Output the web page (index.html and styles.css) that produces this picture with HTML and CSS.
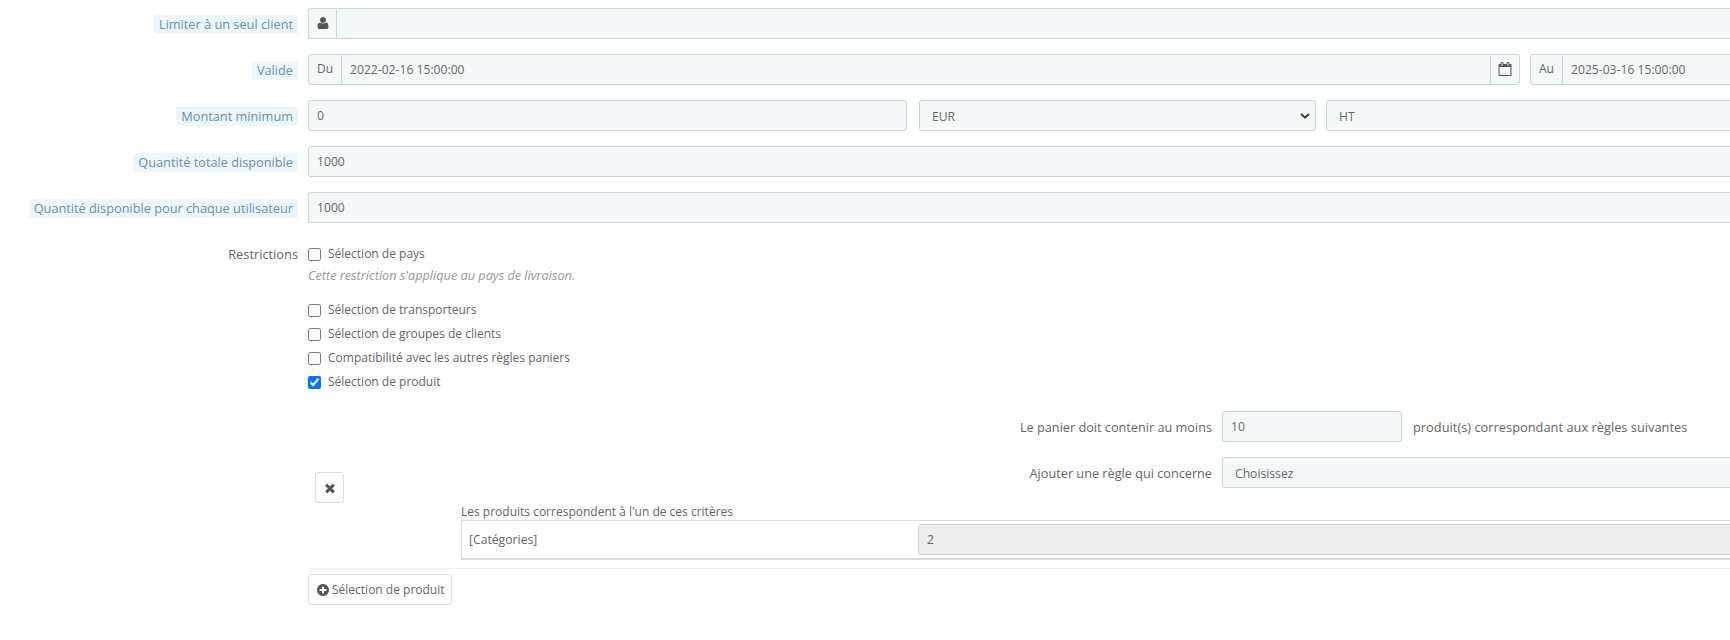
FILE: index.html
```html
<!DOCTYPE html>
<html lang="fr">
<head>
<meta charset="utf-8">
<title>Règle panier</title>
<link rel="stylesheet" href="styles.css">
</head>
<body>
<form class="form">
  <div class="row">
    <div class="label-col"><span class="chip">Limiter à un seul client</span></div>
    <div class="field-col">
      <div class="group">
        <span class="addon addon-icon"><svg class="icon" viewBox="0 0 1792 1792"><path d="M1600 1405q0 120-73 189.5t-194 69.5h-874q-121 0-194-69.5t-73-189.5q0-53 3.5-103.5t14-109 26.5-108.5 43-97.5 62-81 85.5-53.5 111.5-20q9 0 42 21.5t74.5 48 108 48 133.5 21.5 133.5-21.5 108-48 74.5-48 42-21.5q61 0 111.5 20t85.5 53.5 62 81 43 97.5 26.5 108.5 14 109 3.5 103.5zm-320-893q0 159-112.5 271.5t-271.5 112.5-271.5-112.5-112.5-271.5 112.5-271.5 271.5-112.5 271.5 112.5 112.5 271.5z"/></svg></span>
        <input class="control in-group" type="text" value="">
      </div>
    </div>
  </div>

  <div class="row">
    <div class="label-col"><span class="chip">Valide</span></div>
    <div class="field-col split">
      <div class="group group-from">
        <span class="addon addon-du">Du</span>
        <input class="control in-group" type="text" value="2022-02-16 15:00:00">
        <span class="addon addon-end"><svg class="icon" viewBox="0 0 1792 1792"><path d="M192 1664h1408v-1024h-1408v1024zm384-1216v-288q0-14-9-23t-23-9h-64q-14 0-23 9t-9 23v288q0 14 9 23t23 9h64q14 0 23-9t9-23zm768 0v-288q0-14-9-23t-23-9h-64q-14 0-23 9t-9 23v288q0 14 9 23t23 9h64q14 0 23-9t9-23zm384-64v1280q0 52-38 90t-90 38h-1408q-52 0-90-38t-38-90v-1280q0-52 38-90t90-38h128v-96q0-66 47-113t113-47h64q66 0 113 47t47 113v96h384v-96q0-66 47-113t113-47h64q66 0 113 47t47 113v96h128q52 0 90 38t38 90z"/></svg></span>
      </div>
      <div class="group group-to">
        <span class="addon addon-au">Au</span>
        <input class="control in-group" type="text" value="2025-03-16 15:00:00">
      </div>
    </div>
  </div>

  <div class="row">
    <div class="label-col"><span class="chip">Montant minimum</span></div>
    <div class="field-col split">
      <input class="control amount" type="text" value="0">
      <select class="control select currency"><option>EUR</option></select>
      <select class="control select tax"><option>HT</option></select>
    </div>
  </div>

  <div class="row">
    <div class="label-col"><span class="chip">Quantité totale disponible</span></div>
    <div class="field-col"><input class="control" type="text" value="1000"></div>
  </div>

  <div class="row">
    <div class="label-col"><span class="chip">Quantité disponible pour chaque utilisateur</span></div>
    <div class="field-col"><input class="control" type="text" value="1000"></div>
  </div>

  <div class="row restrictions">
    <div class="label-col"><span class="plain-label">Restrictions</span></div>
    <div class="field-col">
      <label class="check"><input type="checkbox">Sélection de pays</label>
      <p class="help">Cette restriction s'applique au pays de livraison.</p>
      <label class="check"><input type="checkbox">Sélection de transporteurs</label>
      <label class="check"><input type="checkbox">Sélection de groupes de clients</label>
      <label class="check"><input type="checkbox">Compatibilité avec les autres règles paniers</label>
      <label class="check"><input type="checkbox" checked>Sélection de produit</label>

      <div class="rule">
        <div class="rule-remove">
          <button class="btn btn-square" type="button"><svg class="icon" viewBox="0 0 1792 1792"><path d="M1490 1322q0 40-28 68l-136 136q-28 28-68 28t-68-28l-294-294-294 294q-28 28-68 28t-68-28l-136-136q-28-28-28-68t28-68l294-294-294-294q-28-28-28-68t28-68l136-136q28-28 68-28t68 28l294 294 294-294q28-28 68-28t68 28l136 136q28 28 28 68t-28 68l-294 294 294 294q28 28 28 68z"/></svg></button>
        </div>
        <div class="rule-body">
          <div class="rule-row">
            <span class="rule-label">Le panier doit contenir au moins</span>
            <input class="control qty" type="text" value="10">
            <span class="rule-after">produit(s) correspondant aux règles suivantes</span>
          </div>
          <div class="rule-row">
            <span class="rule-label">Ajouter une règle qui concerne</span>
            <select class="control select plain"><option>Choisissez</option></select>
          </div>
          <div class="criteria-title">Les produits correspondent à l'un de ces critères</div>
          <div class="criteria">
            <span class="criteria-name">[Catégories]</span>
            <input class="control readonly" type="text" value="2" readonly>
          </div>
        </div>
      </div>

      <hr class="rule-sep">
      <button class="btn btn-add" type="button"><svg class="icon icon-plus" viewBox="0 0 1792 1792"><path d="M1344 960v-128q0-26-19-45t-45-19h-256v-256q0-26-19-45t-45-19h-128q-26 0-45 19t-19 45v256h-256q-26 0-45 19t-19 45v128q0 26 19 45t45 19h256v256q0 26 19 45t45 19h128q26 0 45-19t19-45v-256h256q26 0 45-19t19-45zm320-64q0 209-103 385.5t-279.5 279.5-385.5 103-385.5-103-279.5-279.5-103-385.5 103-385.5 279.5-279.5 385.5-103 385.5 103 279.5 279.5 103 385.5z"/></svg>Sélection de produit</button>
    </div>
  </div>
</form>
</body>
</html>
```
FILE: styles.css
```css
* { box-sizing: border-box; }

html, body {
  overflow: hidden;
}

body {
  margin: 0;
  height: 640px;
  background: #fff;
  color: #666;
  font-family: "Open Sans", "Liberation Sans", sans-serif;
  font-size: 12px;
  line-height: 18px;
}

.form {
  padding-top: 8px;
  width: 1808px;
}

.row {
  display: flex;
  gap: 10px;
  margin-bottom: 15px;
}

.label-col {
  flex: 0 0 298px;
  display: flex;
  justify-content: flex-end;
  align-items: flex-start;
  padding-top: 7px;
}

.chip {
  height: 19px;
  line-height: 19px;
  padding: 0 5px;
  border-radius: 2px;
  background: #edf6fb;
  color: #6492b4;
  font-size: 12.75px;
  white-space: nowrap;
}

.plain-label {
  line-height: 19px;
  color: #666;
  font-size: 12.8px;
}

.field-col {
  flex: 1 1 0;
  min-width: 0;
}

.split {
  display: flex;
}

.control {
  display: block;
  width: 100%;
  height: 31px;
  padding: 0 8px;
  border: 1px solid #c7d6db;
  border-radius: 3px;
  background-color: #f5f8f9;
  color: #666;
  font-family: inherit;
  font-size: 12.15px;
  outline: none;
}

.group {
  display: flex;
  height: 31px;
}

.in-group {
  flex: 1 1 0;
  min-width: 0;
  border-radius: 0 3px 3px 0;
  border-left: 0;
}

.group-from .in-group {
  border-radius: 0;
  border-right: 0;
}

.group-from {
  flex: 0 0 1212px;
}

.group-to {
  flex: 1 1 0;
  margin-left: 10px;
}

.addon {
  flex: none;
  display: flex;
  align-items: center;
  justify-content: center;
  height: 31px;
  border: 1px solid #c7d6db;
  border-radius: 3px 0 0 3px;
  background: #f5f8f9;
  color: #666;
  padding-bottom: 1px;
}

.addon-icon { width: 29px; }
.addon-du { width: 34px; }
.addon-au { width: 33px; }

.addon-end {
  width: 30px;
  padding-right: 1px;
  border-radius: 0 3px 3px 0;
}

.icon {
  display: block;
  flex: none;
  width: 14px;
  height: 14px;
  fill: #555;
}

.amount {
  flex: 0 0 599px;
  width: 599px;
}

.select {
  appearance: none;
  padding: 2px 8px 0 12px;
}

.currency {
  flex: 0 0 397px;
  width: 397px;
  margin-left: 12px;
  background-image: url("data:image/svg+xml,%3Csvg xmlns='http://www.w3.org/2000/svg' width='10' height='6'%3E%3Cpath d='M1 1l4 3.5L9 1' fill='none' stroke='%23444' stroke-width='2.2'/%3E%3C/svg%3E");
  background-repeat: no-repeat;
  background-position: right 5px top 12px;
}

.tax {
  flex: 1 1 0;
  min-width: 0;
  margin-left: 10px;
}

.restrictions {
  margin-bottom: 0;
}

.check {
  display: flex;
  align-items: center;
  height: 24px;
  white-space: nowrap;
}

.check input {
  flex: none;
  width: 13px;
  height: 13px;
  margin: 0 7px 0 0;
}

.restrictions .field-col {
  padding-top: 4px;
}

.help {
  margin: 0 0 14px;
  height: 18px;
  font-size: 12.7px;
  font-style: italic;
  color: #999;
}

.rule {
  display: flex;
  margin-top: 17px;
}

.rule-remove {
  flex: 0 0 153px;
  padding: 61px 0 0 7px;
}

.rule-body {
  flex: 1 1 0;
  min-width: 0;
}

.rule-row {
  display: flex;
  align-items: center;
  gap: 10px;
  margin-bottom: 15px;
}

.rule-label {
  flex: 0 0 751px;
  text-align: right;
  font-size: 12.7px;
}

.qty {
  flex: 0 0 180px;
  width: 180px;
}

.rule-after {
  white-space: nowrap;
  font-size: 12.85px;
  margin-left: 1px;
}

.plain {
  flex: 1 1 0;
  min-width: 0;
}

.criteria-title {
  height: 17px;
  line-height: 18px;
}

.criteria {
  display: flex;
  align-items: center;
  height: 40px;
  padding: 3px 0 3px 7px;
  border: 1px solid #ddd;
  border-bottom-width: 2px;
}

.criteria-name {
  flex: 0 0 449px;
  font-size: 12.2px;
}

.readonly {
  flex: 1 1 0;
  min-width: 0;
  background-color: #eee;
}

.rule-sep {
  height: 1px;
  margin: 8px 0 5px;
  border: 0;
  background: #eee;
}

.btn {
  display: flex;
  align-items: center;
  height: 31px;
  border: 1px solid #ddd;
  border-radius: 3px;
  background: #fff;
  color: #666;
  font-family: inherit;
  font-size: 12px;
  white-space: nowrap;
}

.btn-square {
  justify-content: center;
  width: 29px;
  padding: 0;
}

.btn-add {
  width: 144px;
  padding: 0 7px;
}

.icon-plus {
  margin-right: 2px;
}
```
